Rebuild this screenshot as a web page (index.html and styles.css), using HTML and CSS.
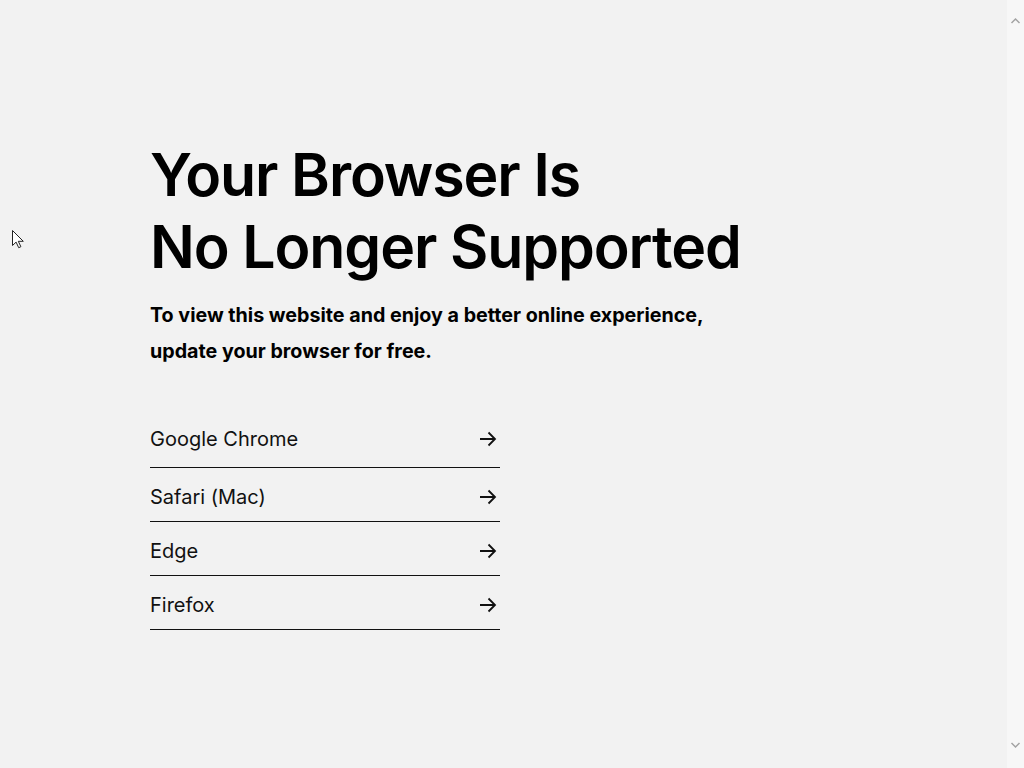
FILE: index.html
```html
<!DOCTYPE html>
<html lang="en">
<head>
<meta charset="utf-8">
<title>Your Browser Is No Longer Supported</title>
<link rel="stylesheet" href="styles.css">
</head>
<body>
<div class="viewport">
  <main class="page">
    <section class="content">
      <h1 class="title">Your Browser Is<br>No Longer Supported</h1>
      <p class="lead">To view this website and enjoy a better online experience,<br>update your browser for free.</p>
      <ul class="browsers">
        <li class="browser first"><span>Google Chrome</span><svg class="arrow" width="18" height="16" viewBox="0 0 18 16"><path d="M1 8h15M9.5 1.5L16 8l-6.5 6.5" fill="none" stroke="#111" stroke-width="1.8"/></svg></li>
        <li class="browser"><span>Safari (Mac)</span><svg class="arrow" width="18" height="16" viewBox="0 0 18 16"><path d="M1 8h15M9.5 1.5L16 8l-6.5 6.5" fill="none" stroke="#111" stroke-width="1.8"/></svg></li>
        <li class="browser"><span>Edge</span><svg class="arrow" width="18" height="16" viewBox="0 0 18 16"><path d="M1 8h15M9.5 1.5L16 8l-6.5 6.5" fill="none" stroke="#111" stroke-width="1.8"/></svg></li>
        <li class="browser"><span>Firefox</span><svg class="arrow" width="18" height="16" viewBox="0 0 18 16"><path d="M1 8h15M9.5 1.5L16 8l-6.5 6.5" fill="none" stroke="#111" stroke-width="1.8"/></svg></li>
      </ul>
    </section>
    <svg class="cursor" width="14" height="20" viewBox="0 0 14 20"><path d="M1.5 1.5v15l3.6-3.4 2.6 5.6 2.2-1-2.6-5.4h5z" fill="#fff" stroke="#222" stroke-width="1" stroke-linejoin="round"/></svg>
  </main>
  <aside class="scrollbar">
    <svg class="chev" width="17" height="17" viewBox="0 0 17 17"><path d="M4.5 11l4-4 4 4" fill="none" stroke="#a3a3a3" stroke-width="1.5"/></svg>
    <svg class="chev" width="17" height="17" viewBox="0 0 17 17"><path d="M4.5 6l4 4 4-4" fill="none" stroke="#a3a3a3" stroke-width="1.5"/></svg>
  </aside>
</div>
</body>
</html>
```

FILE: styles.css
```css
* { box-sizing: border-box; }
html, body { margin: 0; padding: 0; height: 100%; }
body {
  background: #f2f2f2;
  color: #000;
  font-family: Inter, "Noto Sans", "Liberation Sans", sans-serif;
}
.viewport {
  display: flex;
  height: 768px;
  overflow: hidden;
}
.page {
  position: relative;
  flex: 1;
  padding: 139px 0 0 150px;
}
.title {
  margin: 0;
  font-size: 59px;
  line-height: 72px;
  font-weight: 600;
  letter-spacing: -1.1px;
}
.lead {
  margin: 14px 0 0;
  font-size: 19.7px;
  line-height: 36px;
  font-weight: 700;
}
.browsers {
  list-style: none;
  margin: 41px 0 0;
  padding: 0;
  width: 350px;
}
.browser {
  display: flex;
  align-items: center;
  justify-content: space-between;
  height: 54px;
  padding-top: 4px;
  border-bottom: 1px solid #111;
  font-size: 20px;
  color: #111;
}
.browser.first {
  height: 58px;
  padding-top: 0;
}
.browser.wide { height: 55px; }
.arrow { margin-right: 3px; }
.cursor {
  position: absolute;
  left: 11px;
  top: 229px;
}
.scrollbar {
  width: 17px;
  background: #f7f7f7;
  display: flex;
  flex-direction: column;
  justify-content: space-between;
  padding: 12px 0 14px;
}
.chev { display: block; }
```
